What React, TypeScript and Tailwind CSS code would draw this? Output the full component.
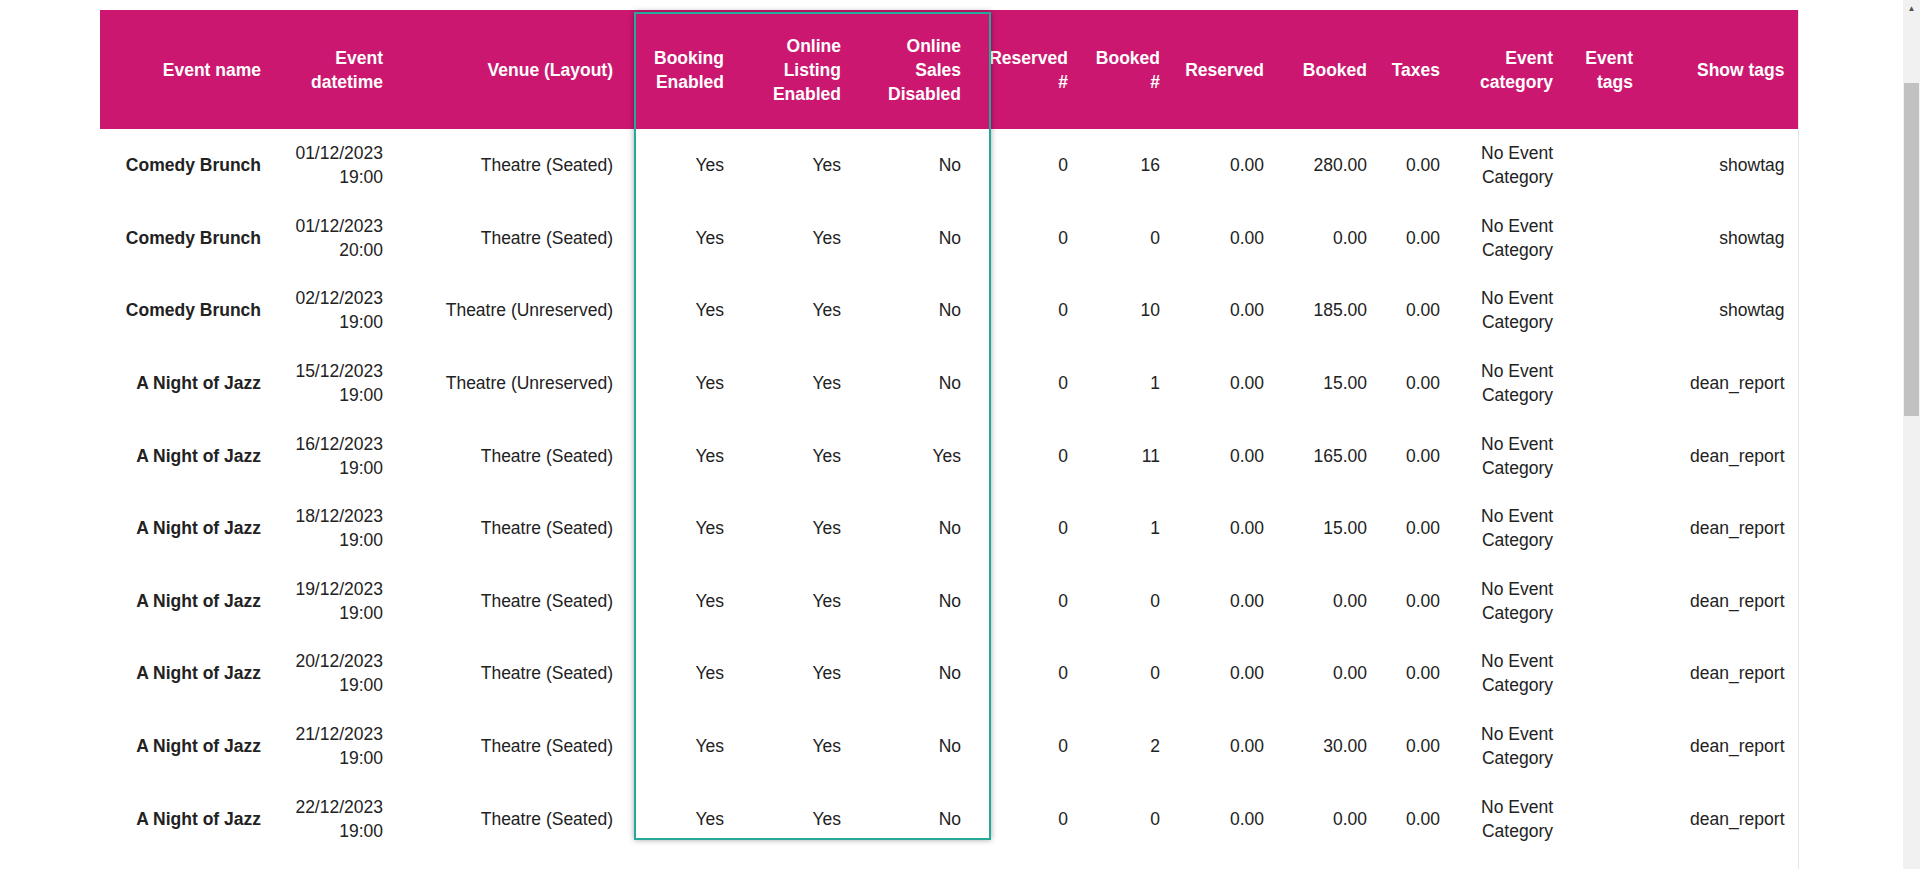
import React from 'react';

type Row = {
  name: string;
  date: string;
  time: string;
  venue: string;
  sales: string;
  booked: string;
  amount: string;
  tag: string;
};

const rows: Row[] = [
  { name: 'Comedy Brunch', date: '01/12/2023', time: '19:00', venue: 'Theatre (Seated)', sales: 'No', booked: '16', amount: '280.00', tag: 'showtag' },
  { name: 'Comedy Brunch', date: '01/12/2023', time: '20:00', venue: 'Theatre (Seated)', sales: 'No', booked: '0', amount: '0.00', tag: 'showtag' },
  { name: 'Comedy Brunch', date: '02/12/2023', time: '19:00', venue: 'Theatre (Unreserved)', sales: 'No', booked: '10', amount: '185.00', tag: 'showtag' },
  { name: 'A Night of Jazz', date: '15/12/2023', time: '19:00', venue: 'Theatre (Unreserved)', sales: 'No', booked: '1', amount: '15.00', tag: 'dean_report' },
  { name: 'A Night of Jazz', date: '16/12/2023', time: '19:00', venue: 'Theatre (Seated)', sales: 'Yes', booked: '11', amount: '165.00', tag: 'dean_report' },
  { name: 'A Night of Jazz', date: '18/12/2023', time: '19:00', venue: 'Theatre (Seated)', sales: 'No', booked: '1', amount: '15.00', tag: 'dean_report' },
  { name: 'A Night of Jazz', date: '19/12/2023', time: '19:00', venue: 'Theatre (Seated)', sales: 'No', booked: '0', amount: '0.00', tag: 'dean_report' },
  { name: 'A Night of Jazz', date: '20/12/2023', time: '19:00', venue: 'Theatre (Seated)', sales: 'No', booked: '0', amount: '0.00', tag: 'dean_report' },
  { name: 'A Night of Jazz', date: '21/12/2023', time: '19:00', venue: 'Theatre (Seated)', sales: 'No', booked: '2', amount: '30.00', tag: 'dean_report' },
  { name: 'A Night of Jazz', date: '22/12/2023', time: '19:00', venue: 'Theatre (Seated)', sales: 'No', booked: '0', amount: '0.00', tag: 'dean_report' },
];

const widths = [174, 122, 230, 111, 117, 120, 107, 92, 104, 103, 73, 113, 80, 152];

const headers: React.ReactNode[] = [
  'Event name',
  <>Event<br />datetime</>,
  'Venue (Layout)',
  <>Booking<br />Enabled</>,
  <>Online<br />Listing<br />Enabled</>,
  <>Online<br />Sales<br />Disabled</>,
  <>Reserved<br />#</>,
  <>Booked<br />#</>,
  'Reserved',
  'Booked',
  'Taxes',
  <>Event<br />category</>,
  <>Event<br />tags</>,
  'Show tags',
];

const App = () => {
  return (
    <div className="flex h-[869px] overflow-hidden bg-white" style={{ fontFamily: '"Liberation Sans", Arial, sans-serif' }}>
      <div className="flex-1 pl-[100px] pr-[100px] pt-[10px]">
        <div className="relative">
          <table className="table-fixed border-collapse text-[17.5px] leading-[24px] text-[#222] border-r border-[#e5e5e5]" style={{ width: 1698 }}>
            <colgroup>
              {widths.map((w, i) => <col key={i} style={{ width: w }} />)}
            </colgroup>
            <thead>
              <tr className="h-[119px] bg-[#cc1770] text-white">
                {headers.map((h, i) => (
                  <th key={i} className="pr-[13px] text-right font-bold whitespace-nowrap">{h}</th>
                ))}
              </tr>
            </thead>
            <tbody>
              {rows.map((r, i) => (
                <tr key={i} className="h-[72.6px] text-right">
                  <td className="pr-[13px] font-bold whitespace-nowrap">{r.name}</td>
                  <td className="pr-[13px]">{r.date}<br />{r.time}</td>
                  <td className="pr-[13px] whitespace-nowrap">{r.venue}</td>
                  <td className="pr-[13px]">Yes</td>
                  <td className="pr-[13px]">Yes</td>
                  <td className="pr-[13px]">{r.sales}</td>
                  <td className="pr-[13px]">0</td>
                  <td className="pr-[13px]">{r.booked}</td>
                  <td className="pr-[13px]">0.00</td>
                  <td className="pr-[13px]">{r.amount}</td>
                  <td className="pr-[13px]">0.00</td>
                  <td className="pr-[13px] whitespace-nowrap">No Event<br />Category</td>
                  <td className="pr-[13px]"></td>
                  <td className="pr-[13px]">{r.tag}</td>
                </tr>
              ))}
              <tr className="h-[60px]"><td colSpan={14}></td></tr>
            </tbody>
          </table>
          <div className="pointer-events-none absolute left-[534px] top-[2px] h-[828px] w-[357px] border-2 border-[#26a99a] shadow-[0_0_6px_rgba(0,0,0,0.35)]" />
        </div>
      </div>
      <div className="flex w-[17px] flex-col items-center bg-[#f1f1f1]">
        <div className="flex h-[17px] items-center justify-center text-[8px] text-[#505050]">▲</div>
        <div className="mt-[66px] h-[333px] w-[15px] bg-[#c1c1c1]" />
      </div>
    </div>
  );
};

export default App;
